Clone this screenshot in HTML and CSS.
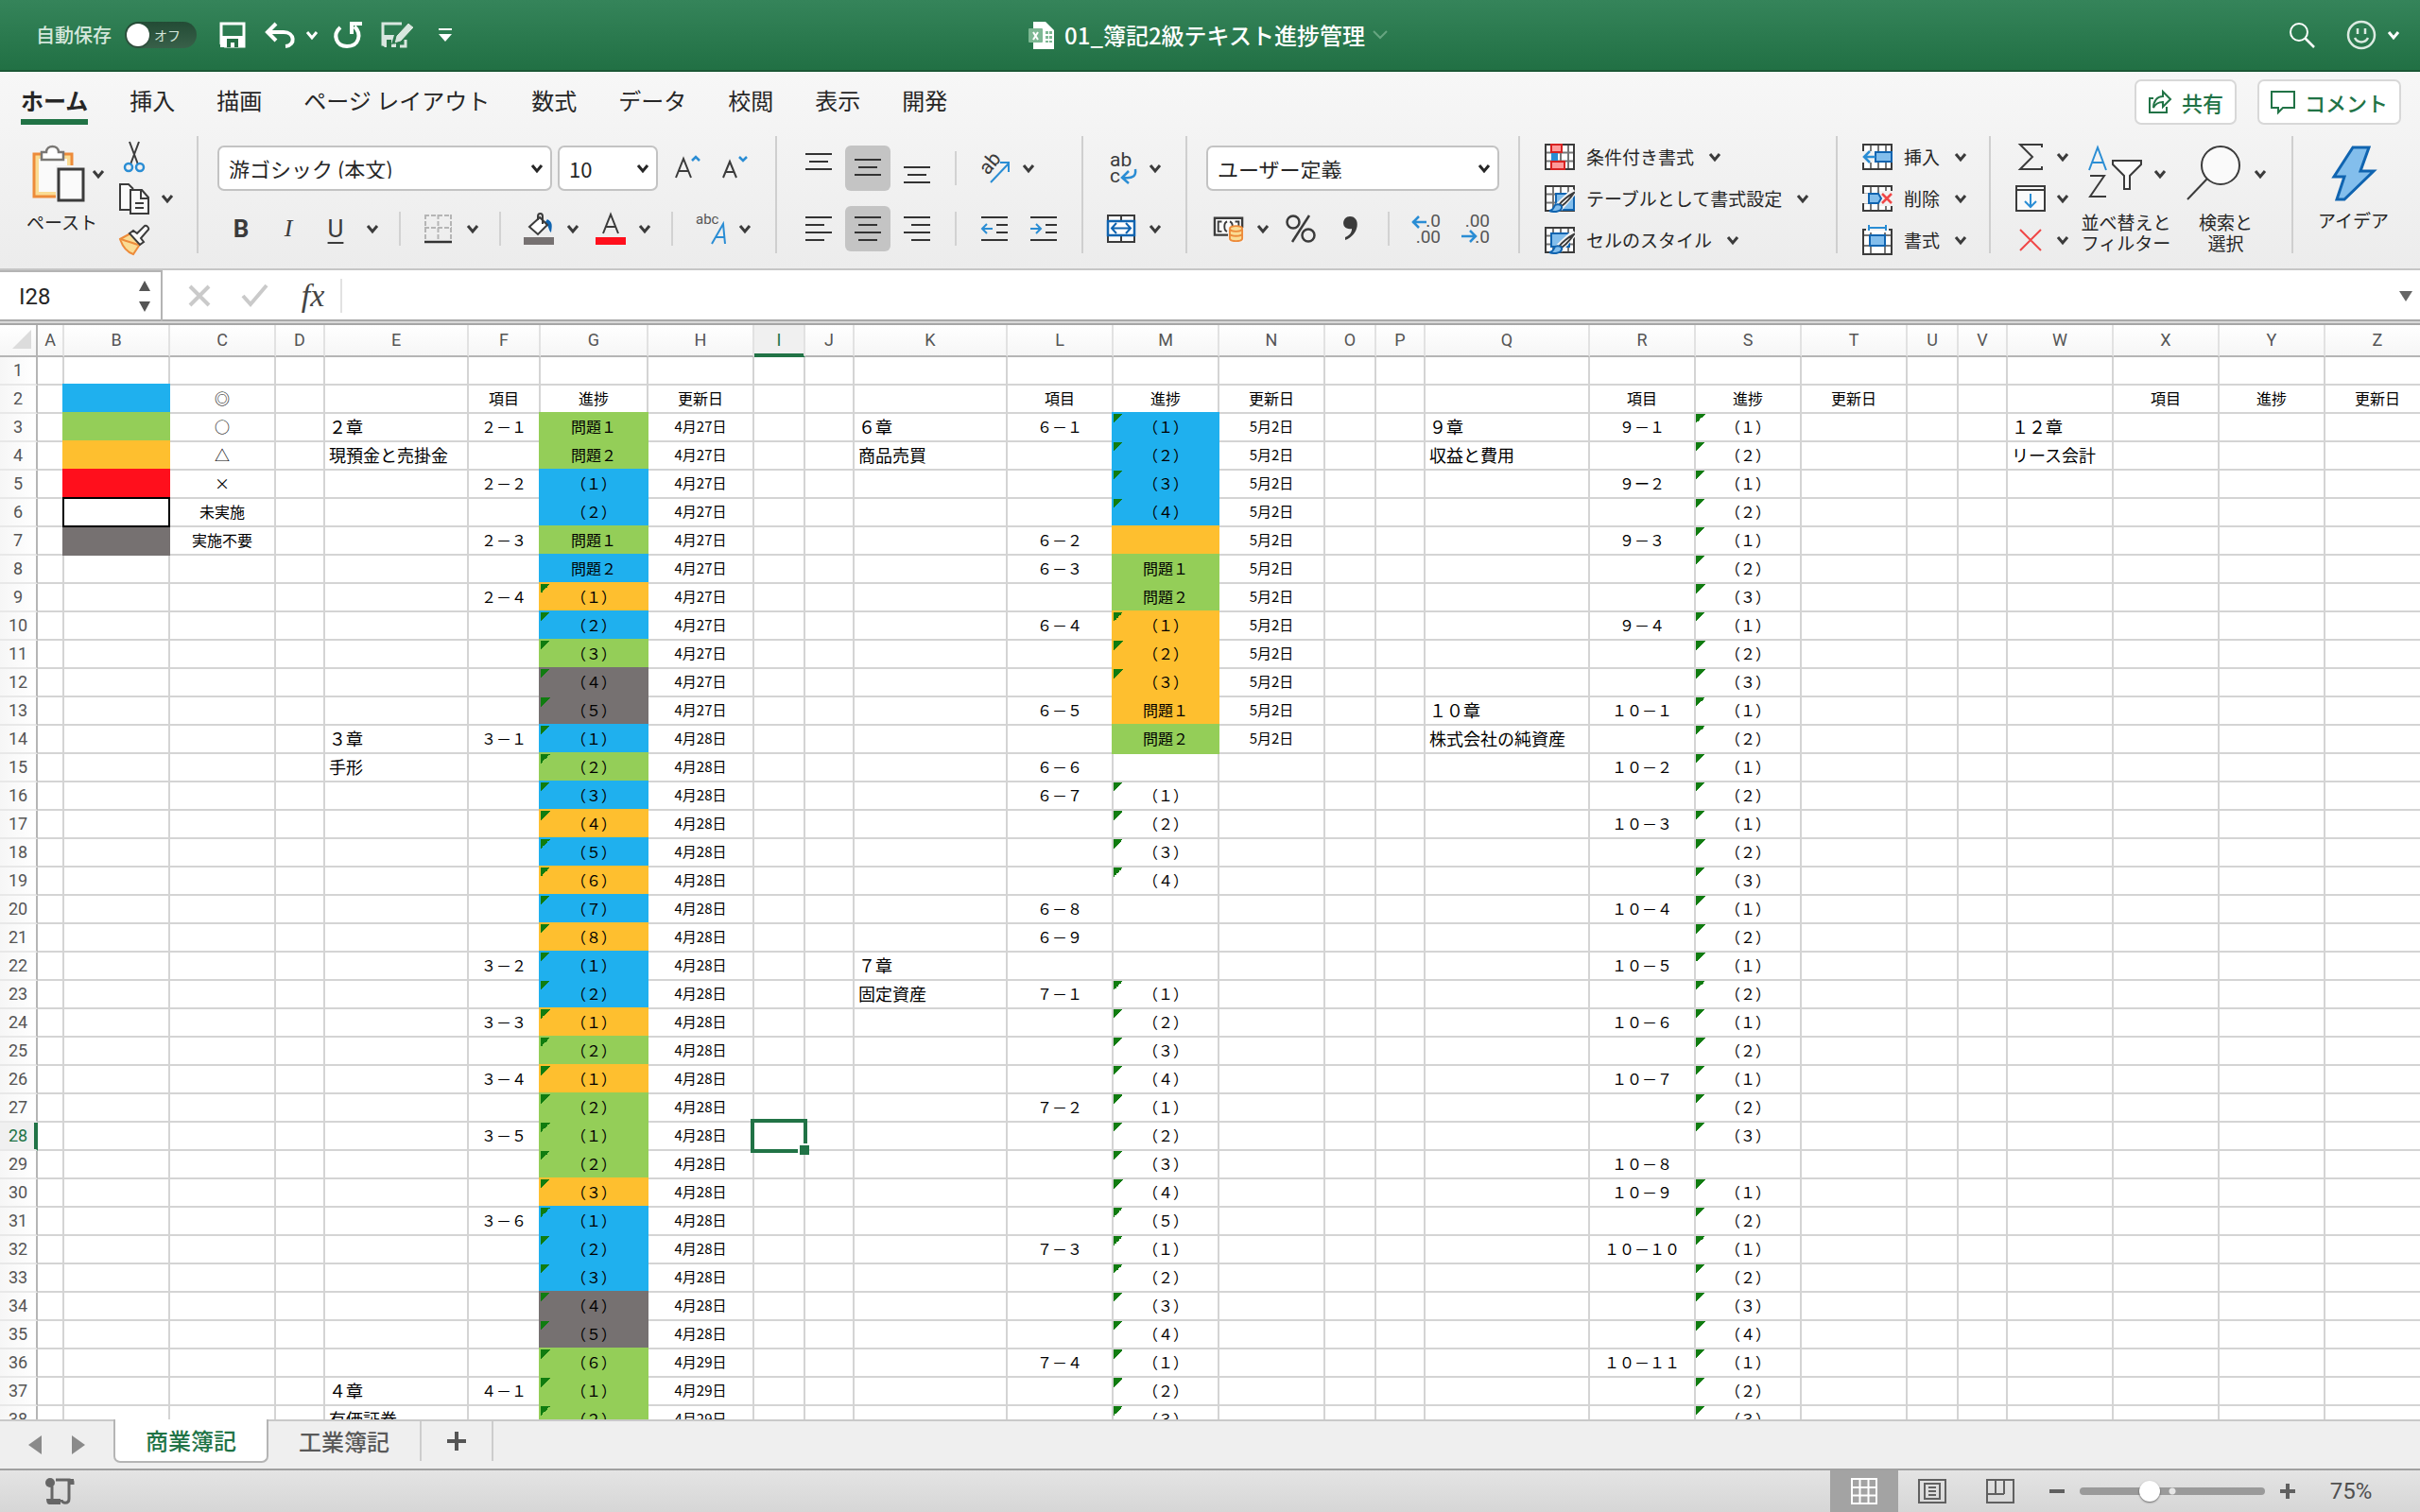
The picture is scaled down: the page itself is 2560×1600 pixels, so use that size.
FILE: index.html
```html
<!DOCTYPE html>
<html lang="ja">
<head>
<meta charset="utf-8">
<title>01_簿記2級テキスト進捗管理</title>
<link rel="stylesheet" href="styles.css">
</head>
<body>
<svg class="sprite" aria-hidden="true">
  <symbol id="chev" viewBox="0 0 24 24"><path d="M7 9l5 6 5-6" fill="none" stroke="currentColor" stroke-width="3"/></symbol>
  <symbol id="grid3" viewBox="0 0 32 28">
    <path d="M1 1h30v26H1z" fill="#fff"/><path d="M1 9.500h30M1 18.500h30M9 1v26M17 1v26M25 1v26" stroke="#777" stroke-width="2"/>
  </symbol>
  <symbol id="brush" viewBox="0 0 32 30">
    <path d="M31 6L15 21l3 3L31 9" fill="#fff" stroke="#f2f2f2" stroke-width="5"/>
    <path d="M31 9C25 12 18 18 16 21l2 2c4-3 9-8 13-14z" fill="#fff" stroke="#3b3b3b" stroke-width="2"/>
    <path d="M5 28c4 0 4-3 6-6 3-2 8 0 7 3-1 4-8 5-13 3z" fill="#83beec" stroke="#1064b0" stroke-width="2"/>
  </symbol>
</svg>

<header class="titlebar">
  <div class="quick">
    <label class="autosave" for="autosave">自動保存</label>
    <span class="toggle"><input type="checkbox" id="autosave"><span class="toggle-text">オフ</span></span>
    <button class="tb save" aria-label="保存"><svg width="28" height="28" viewBox="0 0 28 28"><path d="M2 2h24v24H6l-4-3z" fill="none" stroke="#fff" stroke-width="3"/><path d="M1 15h26v12H1z" fill="#fff"/><path d="M8 18h12v9h-4v-5h-4v5H8z" fill="#256f45"/></svg></button>
    <button class="tb undo" aria-label="元に戻す"><svg width="32" height="28" viewBox="0 0 32 28"><path d="M12 2L3 11l9 9M4 11h16c12 0 13 14 2 15" fill="none" stroke="#fff" stroke-width="4"/></svg></button>
    <button class="tb caret-light" aria-label="元に戻す履歴"><svg width="24" height="24"><use href="#chev"/></svg></button>
    <button class="tb redo" aria-label="繰り返し"><svg width="32" height="30" viewBox="0 0 32 30"><path d="M8 7C-1 15 4 27 15 27c13 0 16-13 8-21" fill="none" stroke="#fff" stroke-width="4"/><path d="M20 14V3h11" fill="none" stroke="#fff" stroke-width="4"/></svg></button>
    <button class="tb edit" aria-label="編集"><svg width="38" height="30" viewBox="0 0 38 30"><g opacity=".82"><path d="M24 3H4v22h3M28 20v7h-6" fill="none" stroke="#fff" stroke-width="3"/><path d="M3 15h13l-3 10 5-1v4H6l-3-3z" fill="#fff"/><path d="M8 20h5v8H8z" fill="#2a7548"/><path d="M16 24l2-8L31 2l6 5-14 15z" fill="#fff" stroke="#2a7548"/></g></svg></button>
    <button class="tb more" aria-label="カスタマイズ"><svg width="16" height="16" viewBox="0 0 16 16"><path d="M1 1h14v2H1zM1 7h14l-7 8z" fill="#fff"/></svg></button>
  </div>
  <h1 class="doc">
    <svg width="28" height="30" viewBox="0 0 28 30"><path d="M5 1h13l9 9v20H5z" fill="#fff"/><path d="M18 11h3v3h-3zM22 11h3v3h-3zM18 16h3v3h-3zM22 16h3v3h-3zM18 21h3v2h-3zM22 21h3v2h-3z" fill="#7db793"/><rect y="8" width="15" height="15" rx="1" fill="#7db793"/><path d="M5 12l5 8M10 12l-5 8" stroke="#fff" stroke-width="2"/></svg>
    <span>01_簿記2級テキスト進捗管理</span>
    <svg class="doc-caret" width="24" height="24" viewBox="0 0 24 24"><path d="M5 8l7 7 7-7" fill="none" stroke="#67a581" stroke-width="2"/></svg>
  </h1>
  <div class="account">
    <button class="tb" aria-label="検索"><svg width="30" height="30" viewBox="0 0 30 30"><circle cx="12" cy="12" r="9" fill="none" stroke="#fff" stroke-width="2"/><path d="M18 18l10 10" stroke="#fff" stroke-width="2.500"/></svg></button>
    <button class="tb smile" aria-label="フィードバック"><svg width="32" height="32" viewBox="0 0 32 32"><g fill="none" stroke="#dcebe2" stroke-width="2.500"><circle cx="16" cy="16" r="14"/><path d="M12 9v6M20 9v6M9 19c3 6 11 6 14 0"/></g></svg></button>
    <button class="tb caret-light" aria-label="アカウント"><svg width="24" height="24"><use href="#chev"/></svg></button>
  </div>
</header>

<section class="ribbon">
  <div class="tabrow">
    <nav class="tabs">
      <a href="#home" class="active">ホーム</a><a href="#insert">挿入</a><a href="#draw">描画</a><a href="#layout">ページ レイアウト</a><a href="#formula">数式</a><a href="#data">データ</a><a href="#review">校閲</a><a href="#view">表示</a><a href="#dev">開発</a>
    </nav>
    <div class="share">
      <button><svg width="26" height="26" viewBox="0 0 26 26"><g fill="none" stroke="#217346" stroke-width="2"><path d="M6 9H2v15h18v-6"/><path d="M16 7V2l8 8-8 8v-5c-5 0-8 2-10 6 0-7 4-12 10-12z"/></g></svg>共有</button>
      <button><svg width="26" height="26" viewBox="0 0 26 26"><path d="M1 2h24v17H13l-5 5v-5H1z" fill="none" stroke="#217346" stroke-width="2"/></svg>コメント</button>
    </div>
  </div>

  <div class="groups">
    <div class="group clipboard">
      <div class="big">
        <div class="split">
          <button aria-label="ペースト"><svg width="56" height="60" viewBox="0 0 56 60"><path d="M2 9h40v45H2z" fill="#fadc94" stroke="#ed8b3a" stroke-width="3"/><path d="M7 14h30v35H7z" fill="#fafafa"/><path d="M10 7h5c0-8 13-8 13 0h5v8H10z" fill="#fff" stroke="#797774" stroke-width="2.500"/><path d="M25 21h31v39H25z" fill="#f2f2f2"/><path d="M28 25h26v33H28z" fill="#fafafa" stroke="#3b3b3b" stroke-width="3"/></svg></button>
          <button class="caret" aria-label="ペーストのオプション"><svg width="24" height="24"><use href="#chev"/></svg></button>
        </div>
        <span class="cap">ペースト</span>
      </div>
      <div class="stack">
        <button aria-label="カット"><svg width="34" height="32" viewBox="0 0 34 32"><path d="M12 0l9 24M22 0l-9 24" stroke="#3b3b3b" stroke-width="2"/><g fill="none" stroke="#2a8dd4" stroke-width="2.500"><circle cx="11" cy="27" r="4"/><circle cx="23" cy="27" r="4"/></g></svg></button>
        <span class="split"><button aria-label="コピー"><svg width="34" height="34" viewBox="0 0 34 34"><path d="M14 29H2V2h9l5 5" fill="#fafafa" stroke="#3b3b3b" stroke-width="2"/><path d="M13 8h12l7 8v17H13z" fill="#fafafa" stroke="#3b3b3b" stroke-width="2"/><path d="M24 8v9h8M18 22h9M18 27h9" fill="none" stroke="#3b3b3b" stroke-width="2"/></svg></button><button class="caret" aria-label="コピーのオプション"><svg width="24" height="24"><use href="#chev"/></svg></button></span>
        <button aria-label="書式のコピー"><svg width="34" height="32" viewBox="0 0 34 32"><path d="M2 15l11-6 11 10-8 12C10 29 5 24 2 15z" fill="#fadc94" stroke="#ed8b3a" stroke-width="2"/><path d="M3 15c8 3 13 4 18 6" stroke="#ed8b3a" stroke-width="2"/><path d="M12 9l4-3 4 3 8-8c2-1 5 2 4 4l-8 9 3 4-4 3z" fill="#fafafa" stroke="#3b3b3b" stroke-width="2"/></svg></button>
      </div>
    </div>

    <div class="group font">
      <div class="line tight">
        <span class="combo wide"><select aria-label="フォント"><option>游ゴシック (本文)</option></select><svg width="24" height="24"><use href="#chev"/></svg></span>
        <span class="combo small"><select aria-label="フォントサイズ"><option>10</option></select><svg width="24" height="24"><use href="#chev"/></svg></span>
        <button class="grow" aria-label="フォントサイズの拡大"><svg width="28" height="28" viewBox="0 0 28 28"><path d="M1 24L9 4l8 20M4 17h10" fill="none" stroke="#3b3b3b" stroke-width="2"/><path d="M18 6l4-4 4 4" fill="none" stroke="#2a8dd4" stroke-width="2.500"/></svg></button>
        <button class="shrink" aria-label="フォントサイズの縮小"><svg width="28" height="28" viewBox="0 0 28 28"><path d="M1 24L8 7l7 17M4 18h8" fill="none" stroke="#3b3b3b" stroke-width="2"/><path d="M18 2l4 4 4-4" fill="none" stroke="#2a8dd4" stroke-width="2.500"/></svg></button>
      </div>
      <div class="line">
        <button class="letter bold">B</button><button class="letter italic">I</button><button class="letter under">U</button><button class="caret" aria-label="下線のオプション"><svg width="24" height="24"><use href="#chev"/></svg></button>
        <i class="vsep"></i>
        <span class="split"><button aria-label="罫線"><svg width="32" height="32" viewBox="0 0 32 32"><path d="M1 2h29M1 15h29M2 1v28M15.500 1v28M29 1v28" stroke="#b5b5b5" stroke-width="2" stroke-dasharray="5 2"/><path d="M1 30h29" stroke="#333" stroke-width="2.500"/></svg></button><button class="caret" aria-label="罫線のオプション"><svg width="24" height="24"><use href="#chev"/></svg></button></span>
        <i class="vsep"></i>
        <span class="split"><button aria-label="塗りつぶしの色"><svg width="32" height="34" viewBox="0 0 32 34"><path d="M25 7c6 3 5 7 4 14-3-2-2-8-7-10z" fill="#1064b0"/><path d="M17 5L6 15l9 8 10-10z" fill="#fff" stroke="#3b3b3b" stroke-width="2"/><path d="M15 8V4c0-4 5-4 5 0v8" fill="none" stroke="#3b3b3b" stroke-width="2"/><path d="M0 26h32v8H0z" fill="#767171"/></svg></button><button class="caret" aria-label="塗りつぶしのオプション"><svg width="24" height="24"><use href="#chev"/></svg></button></span>
        <span class="split next"><button aria-label="フォントの色"><svg width="32" height="34" viewBox="0 0 32 34"><path d="M8 22l8-20 8 20M11 15h10" fill="none" stroke="#3b3b3b" stroke-width="2"/><path d="M0 26h32v8H0z" fill="#ff0f1c"/></svg></button><button class="caret" aria-label="フォントの色のオプション"><svg width="24" height="24"><use href="#chev"/></svg></button></span>
        <i class="vsep"></i>
        <span class="split"><button class="phonetic" aria-label="ふりがな"><svg width="32" height="34" viewBox="0 0 32 34"><text x="0" y="12" font-size="15" fill="#555">abc</text><path d="M17 33L29 12l2 21M21 26h9" fill="none" stroke="#2a8dd4" stroke-width="2"/></svg></button><button class="caret" aria-label="ふりがなのオプション"><svg width="24" height="24"><use href="#chev"/></svg></button></span>
      </div>
    </div>

    <div class="group align">
      <div class="line">
        <span class="trio">
          <button aria-label="上揃え"><svg width="28" height="32" viewBox="0 0 28 32"><path d="M0 1h28M4 9h20M0 17h28" stroke="#333" stroke-width="2"/></svg></button>
          <button class="on" aria-label="上下中央揃え"><svg width="28" height="32" viewBox="0 0 28 32"><path d="M0 7h28M4 15h20M0 23h28" stroke="#333" stroke-width="2"/></svg></button>
          <button aria-label="下揃え"><svg width="28" height="32" viewBox="0 0 28 32"><path d="M0 15h28M4 23h20M0 31h28" stroke="#333" stroke-width="2"/></svg></button>
        </span>
        <i class="vsep"></i>
        <span class="split"><button aria-label="方向"><svg width="32" height="32" viewBox="0 0 32 32"><text font-size="21" fill="#3b3b3b" transform="translate(9 24) rotate(-50)">ab</text><path d="M12 31L31 11M22 10h9v10" fill="none" stroke="#2a8dd4" stroke-width="2"/></svg></button><button class="caret" aria-label="方向のオプション"><svg width="24" height="24"><use href="#chev"/></svg></button></span>
      </div>
      <div class="line">
        <span class="trio">
          <button aria-label="左揃え"><svg width="28" height="28" viewBox="0 0 28 28"><path d="M0 2h28M0 10h20M0 18h28M0 26h20" stroke="#333" stroke-width="2"/></svg></button>
          <button class="on" aria-label="中央揃え"><svg width="28" height="28" viewBox="0 0 28 28"><path d="M0 2h28M4 10h20M0 18h28M4 26h20" stroke="#333" stroke-width="2"/></svg></button>
          <button aria-label="右揃え"><svg width="28" height="28" viewBox="0 0 28 28"><path d="M0 2h28M8 10h20M0 18h28M8 26h20" stroke="#333" stroke-width="2"/></svg></button>
        </span>
        <i class="vsep"></i>
        <span class="pair">
          <button aria-label="インデントを減らす"><svg width="32" height="28" viewBox="0 0 32 28"><path d="M2 2h28M18 10h12M18 18h12M2 26h28" stroke="#333" stroke-width="2"/><path d="M14 14H3M8 9l-5 5 5 5" fill="none" stroke="#2a8dd4" stroke-width="2"/></svg></button>
          <button aria-label="インデントを増やす"><svg width="32" height="28" viewBox="0 0 32 28"><path d="M2 2h28M18 10h12M18 18h12M2 26h28" stroke="#333" stroke-width="2"/><path d="M2 14h11M8 9l5 5-5 5" fill="none" stroke="#2a8dd4" stroke-width="2"/></svg></button>
        </span>
      </div>
    </div>

    <div class="group wrap">
      <div class="line"><span class="split"><button aria-label="折り返して全体を表示"><svg width="32" height="34" viewBox="0 0 32 34"><g font-size="21" fill="#3b3b3b"><text x="4" y="15">ab</text><text x="4" y="32">c</text></g><path d="M31 18c1 7-2 10-12 9M24 20l-7 7 7 6" fill="none" stroke="#2a8dd4" stroke-width="2.500"/></svg></button><button class="caret" aria-label="折り返しのオプション"><svg width="24" height="24"><use href="#chev"/></svg></button></span></div>
      <div class="line"><span class="split"><button aria-label="セルを結合"><svg width="32" height="32" viewBox="0 0 32 32"><path d="M2 2h28v28H2zM16 2v28" fill="#fafafa" stroke="#3b3b3b" stroke-width="2"/><path d="M2 8h28v15H2z" fill="#fff" stroke="#1064b0" stroke-width="2.500"/><path d="M6 15.500h20M11 10l-5 5.500 5 5.500M21 10l5 5.500-5 5.500" fill="none" stroke="#1064b0" stroke-width="2"/></svg></button><button class="caret" aria-label="結合のオプション"><svg width="24" height="24"><use href="#chev"/></svg></button></span></div>
    </div>

    <div class="group number">
      <div class="line"><span class="combo format"><select aria-label="表示形式"><option>ユーザー定義</option></select><svg width="24" height="24"><use href="#chev"/></svg></span></div>
      <div class="line inset">
        <span class="split"><button aria-label="通貨"><svg width="32" height="30" viewBox="0 0 34 30"><path d="M1 3h31v19H1z" fill="#fafafa" stroke="#3b3b3b" stroke-width="2.500"/><path d="M9 7H5v11h4M15 7c-4 1-4 10 0 11M18 7c4 1 4 10 0 11M24 7h4v5" fill="none" stroke="#3b3b3b" stroke-width="2"/><path d="M16 14h18v16H16z" fill="#f2f2f2"/><path d="M18 16v10c0 4 14 4 14 0V16" fill="#fadc94" stroke="#ed8b3a" stroke-width="2"/><ellipse cx="25" cy="15" rx="7" ry="3" fill="#fadc94" stroke="#ed8b3a" stroke-width="2"/><path d="M18 21c1 3 13 3 14 0" fill="none" stroke="#ed8b3a" stroke-width="2"/></svg></button><button class="caret" aria-label="通貨のオプション"><svg width="24" height="24"><use href="#chev"/></svg></button></span>
        <button class="next" aria-label="パーセント"><svg width="32" height="32" viewBox="0 0 32 32"><g fill="none" stroke="#3b3b3b" stroke-width="2.500"><circle cx="8" cy="9" r="6.500"/><circle cx="24" cy="23" r="6.500"/><path d="M25 2L7 30"/></g></svg></button>
        <button class="comma" aria-label="桁区切り"><svg width="32" height="32" viewBox="0 0 32 32"><path d="M16 3c12 0 10 20-5 25v-3c5-2 7-5 7-9-12 2-11-13-2-13z" fill="#3b3b3b"/></svg></button>
        <i class="vsep"></i>
        <span class="pair">
          <button aria-label="小数点以下の桁数を増やす"><svg width="32" height="34" viewBox="0 0 32 34"><g font-size="19" fill="#555" text-anchor="end"><text x="30" y="15">.0</text><text x="30" y="32">.00</text></g><path d="M15 10H0M7 4l-6 6 6 6" fill="none" stroke="#2a8dd4" stroke-width="2.500"/></svg></button>
          <button aria-label="小数点以下の桁数を減らす"><svg width="32" height="34" viewBox="0 0 32 34"><g font-size="19" fill="#555" text-anchor="end"><text x="30" y="15">.00</text><text x="30" y="32">.0</text></g><path d="M0 25h14M9 19l6 6-6 6" fill="none" stroke="#2a8dd4" stroke-width="2.500"/></svg></button>
        </span>
      </div>
    </div>

    <div class="group list styles">
      <button><svg width="32" height="30" viewBox="0 0 32 30"><use href="#grid3" width="32" height="28" y="1"/><path d="M1 2h30v26H1z" fill="none" stroke="#3b3b3b" stroke-width="2"/><path d="M7 11h7v8H7z" fill="#2a8dd4"/><path d="M7 2h11v8H7zM7 20h14v8H7z" fill="#ff9a9a" stroke="#d82222" stroke-width="2"/></svg>条件付き書式<svg class="c" width="24" height="24"><use href="#chev"/></svg></button>
      <button><svg width="32" height="30" viewBox="0 0 32 30"><use href="#grid3" width="32" height="28" y="1"/><path d="M1 2h30v26H1z" fill="none" stroke="#3b3b3b" stroke-width="2"/><path d="M12 10h19v17H12z" fill="#83beec" stroke="#1064b0" stroke-width="2"/><use href="#brush" width="32" height="30"/></svg>テーブルとして書式設定<svg class="c" width="24" height="24"><use href="#chev"/></svg></button>
      <button><svg width="32" height="30" viewBox="0 0 32 30"><use href="#grid3" width="32" height="28" y="1"/><path d="M1 2h30v26H1z" fill="none" stroke="#3b3b3b" stroke-width="2"/><path d="M7 8h19v14H7z" fill="#83beec" stroke="#1064b0" stroke-width="2"/><use href="#brush" width="32" height="30"/></svg>セルのスタイル<svg class="c" width="24" height="24"><use href="#chev"/></svg></button>
    </div>

    <div class="group list cells">
      <button><svg width="32" height="30" viewBox="0 0 32 30"><use href="#grid3" width="32" height="28" y="1"/><path d="M1 10V2h30v26H1v-8" fill="none" stroke="#3b3b3b" stroke-width="2"/><path d="M0 9h14v12H0z" fill="#f2f2f2"/><path d="M14 10h17v10H14z" fill="#83beec" stroke="#1064b0" stroke-width="2"/><path d="M14 15H2M8 9l-6 6 6 6" fill="none" stroke="#2a8dd4" stroke-width="2.500"/></svg>挿入<svg class="c" width="24" height="24"><use href="#chev"/></svg></button>
      <button><svg width="32" height="30" viewBox="0 0 32 30"><use href="#grid3" width="32" height="28" y="1"/><path d="M1 10V2h30v26H1v-8" fill="none" stroke="#3b3b3b" stroke-width="2"/><path d="M0 10h6v10H0zM18 7h14v16H18z" fill="#f2f2f2"/><path d="M7 10h10l3 5-3 5H7z" fill="#83beec" stroke="#1064b0" stroke-width="2"/><path d="M21 10l10 10M31 10L21 20" stroke="#f04747" stroke-width="2.500"/></svg>削除<svg class="c" width="24" height="24"><use href="#chev"/></svg></button>
      <button><svg width="32" height="32" viewBox="0 0 32 32"><path d="M1 5h30v26H1z" fill="#fff"/><path d="M1 11h30M1 22h30M9 8v22M24 8v22" stroke="#777" stroke-width="2"/><path d="M4 5H1v26h30V5h-3" fill="none" stroke="#3b3b3b" stroke-width="2"/><path d="M8 11h16v11H8z" fill="#83beec" stroke="#1064b0" stroke-width="2"/><path d="M5 0h22v6H5z" fill="#f2f2f2"/><path d="M7 0v6M25 0v6M7 3h18" stroke="#2a8dd4" stroke-width="2"/></svg>書式<svg class="c" width="24" height="24"><use href="#chev"/></svg></button>
    </div>

    <div class="group editing">
      <div class="stack">
        <span class="split"><button aria-label="オート SUM"><svg width="32" height="30" viewBox="0 0 32 30"><path d="M28 5V2H5l13 13L5 28h23v-3" fill="none" stroke="#3b3b3b" stroke-width="2"/></svg></button><button class="caret" aria-label="オート SUM のオプション"><svg width="24" height="24"><use href="#chev"/></svg></button></span>
        <span class="split"><button aria-label="フィル"><svg width="32" height="30" viewBox="0 0 32 30"><path d="M1 2h30v26H1zM1 6h30" fill="#fafafa" stroke="#3b3b3b" stroke-width="2"/><path d="M16 10v13M10 18l6 6 6-6" fill="none" stroke="#2a8dd4" stroke-width="2"/></svg></button><button class="caret" aria-label="フィルのオプション"><svg width="24" height="24"><use href="#chev"/></svg></button></span>
        <span class="split"><button aria-label="クリア"><svg width="32" height="30" viewBox="0 0 32 30"><path d="M5 4l22 22M27 4L5 26" stroke="#f04747" stroke-width="2"/></svg></button><button class="caret" aria-label="クリアのオプション"><svg width="24" height="24"><use href="#chev"/></svg></button></span>
      </div>
      <div class="big sort">
        <div class="split"><button aria-label="並べ替えとフィルター"><svg width="58" height="60" viewBox="0 0 58 60"><path d="M1 26l9-24 9 24M4 18h12" fill="none" stroke="#2a8dd4" stroke-width="2"/><path d="M2 32h15L2 54h17" fill="none" stroke="#3b3b3b" stroke-width="2"/><path d="M26 16h30v4L44 32v14h-6V32L26 20z" fill="#fafafa" stroke="#3b3b3b" stroke-width="2"/></svg></button><button class="caret" aria-label="並べ替えのオプション"><svg width="24" height="24"><use href="#chev"/></svg></button></div>
        <span class="cap">並べ替えと<br>フィルター</span>
      </div>
      <div class="big find">
        <div class="split"><button aria-label="検索と選択"><svg width="58" height="60" viewBox="0 0 58 60"><circle cx="36" cy="21" r="20" fill="#fafafa" stroke="#3b3b3b" stroke-width="2"/><path d="M22 35L1 57" stroke="#3b3b3b" stroke-width="2"/></svg></button><button class="caret" aria-label="検索のオプション"><svg width="24" height="24"><use href="#chev"/></svg></button></div>
        <span class="cap">検索と<br>選択</span>
      </div>
    </div>

    <div class="group ideas">
      <button class="idea"><svg width="46" height="60" viewBox="0 0 46 60"><path d="M22 2h17l-9 25h14L13 57H5l8-24H2z" fill="#83beec" stroke="#1064b0" stroke-width="3"/></svg><span class="cap">アイデア</span></button>
    </div>
  </div>
</section>

<section class="formula">
  <div class="namebox"><input type="text" value="I28" aria-label="名前ボックス"><svg width="16" height="34" viewBox="0 0 16 34"><path d="M2 11L8 0l6 11zM2 22h12L8 33z" fill="#555"/></svg></div>
  <button aria-label="キャンセル"><svg width="26" height="26" viewBox="0 0 26 26"><path d="M3 3l20 20M23 3L3 23" stroke="#cacaca" stroke-width="4"/></svg></button>
  <button aria-label="入力"><svg width="30" height="26" viewBox="0 0 30 26"><path d="M2 13l8 9L27 2" fill="none" stroke="#cacaca" stroke-width="4"/></svg></button>
  <button class="fx" aria-label="関数の挿入">fx</button>
  <i class="vsep"></i>
  <input class="entry" type="text" aria-label="数式バー">
  <svg class="expand" width="14" height="12" viewBox="0 0 14 12"><path d="M0 1h14L7 12z" fill="#666"/></svg>
</section>

<main class="sheet"><table id="sheet"></table></main>

<footer>
  <div class="sheetbar">
    <button class="nav" aria-label="前のシート"><svg width="14" height="20" viewBox="0 0 14 20"><path d="M14 0v20L0 10z" fill="#8a8a8a"/></svg></button>
    <button class="nav" aria-label="次のシート"><svg width="14" height="20" viewBox="0 0 14 20"><path d="M0 0v20l14-10z" fill="#8a8a8a"/></svg></button>
    <button class="stab active">商業簿記</button><button class="stab">工業簿記</button>
    <button class="stab add" aria-label="シートの追加"><svg width="20" height="20" viewBox="0 0 20 20"><path d="M0 10h20M10 0v20" stroke="#555" stroke-width="4"/></svg></button>
  </div>
  <div class="status">
    <button class="macro" aria-label="マクロの記録"><svg width="32" height="30" viewBox="0 0 32 30"><circle cx="6" cy="6" r="5" fill="#666"/><path d="M8 10v14M12 3h14v20c0 6-8 5-8 1M30 8V5c0-2-4-2-4 0" fill="none" stroke="#666" stroke-width="3"/><path d="M2 23h15v6H5c-2 0-3-3-3-6z" fill="#666"/><path d="M24 2h7v6h-5z" fill="#666"/></svg></button>
    <div class="views">
      <button class="on" aria-label="標準"><svg width="28" height="28" viewBox="0 0 28 28"><path d="M1 1h26v26H1zM1 10h26M1 18.500h26M9.500 1v26M18.500 1v26" fill="none" stroke="#fff" stroke-width="2"/></svg></button>
      <button aria-label="ページ レイアウト"><svg width="30" height="28" viewBox="0 0 30 28"><path d="M1 2h28v24H1zM7 6h16v16H7zM11 10h8M11 14h8M11 18h8" fill="none" stroke="#606060" stroke-width="2"/></svg></button>
      <button aria-label="改ページ プレビュー"><svg width="30" height="28" viewBox="0 0 30 28"><path d="M1 2h28v24H1zM10 2v15M19 2v15M1 17h18" fill="none" stroke="#606060" stroke-width="2"/></svg></button>
    </div>
    <button class="step" aria-label="縮小"><svg width="20" height="20" viewBox="0 0 20 20"><path d="M2 10h16" stroke="#606060" stroke-width="4"/></svg></button>
    <input type="range" class="zoom" min="0" max="100" value="36" aria-label="ズーム">
    <button class="step" aria-label="拡大"><svg width="20" height="20" viewBox="0 0 20 20"><path d="M2 10h16M10 2v16" stroke="#606060" stroke-width="4"/></svg></button>
    <button class="pct">75%</button>
  </div>
</footer>
<script src="sheet.js"></script>
</body>
</html>
```
FILE: styles.css
```css
*{box-sizing:border-box}
body{margin:0;height:100vh;display:flex;flex-direction:column;overflow:hidden;background:#fff;color:#262626;font-family:"Noto Sans CJK JP",sans-serif;font-size:19px;line-height:22px}
button,input,select{font:inherit;color:inherit;margin:0;padding:0;border:0;background:none}
button{display:inline-flex;align-items:center;justify-content:center;flex:none}
svg{display:block;flex:none;overflow:visible}
svg text{font-family:Roboto,sans-serif}
.sprite{width:0;height:0;position:absolute}

/* title bar */
.titlebar{display:grid;grid-template-columns:1fr auto 1fr;align-items:center;flex:none;height:76px;background:linear-gradient(#35845a,#217044);border-bottom:2px solid #1b5735;color:#fff}
.quick{display:flex;align-items:center;padding-left:38px}
.autosave{font-size:20px;font-weight:500;color:#d5e7dc}
.toggle{display:grid;align-items:center;width:76px;height:28px;margin:0 24px 0 14px}
.toggle>*{grid-area:1/1}
.toggle input{appearance:none;width:76px;height:28px;border-radius:14px;background:linear-gradient(#234b35,#386049);display:flex;align-items:center}
.toggle input::before{content:"";width:24px;height:24px;margin-left:2px;border-radius:50%;background:#fff;box-shadow:0 1px 2px #0006}
.toggle-text{font-size:14px;padding-left:31px;color:#d5e7dc}
.undo{margin-left:20px}
.caret-light{margin-left:6px;color:#fff}
.redo{margin-left:10px}
.edit{margin-left:17px}
.more{margin-left:24px}
.doc{display:flex;align-items:center;gap:10px;margin:0;font-size:24px;font-weight:500}
.doc-caret{margin-left:-6px}
.account{display:flex;align-items:center;justify-content:flex-end;padding-right:16px}
.smile{margin-left:32px}

/* ribbon */
.ribbon{flex:none;height:210px;background:linear-gradient(#f7f7f7,#ececec);border-bottom:2px solid #c6c6c6}
.tabrow{display:flex;justify-content:space-between;height:68px;padding:8px 20px 0 22px}
.tabs{display:flex;gap:44px;font-size:24px;line-height:44px}
.tabs a{color:inherit;text-decoration:none;height:48px}
.tabs .active{font-weight:700;background:linear-gradient(#217346,#217346) 0 42px/72px 6px no-repeat}
.share{display:flex;gap:22px}
.share button{height:48px;padding:0 12px;gap:10px;font-size:22px;line-height:44px;font-weight:500;color:#217346;background:#fff;border:2px solid #d8d8d8;border-radius:7px}
.groups{display:grid;grid-template-columns:210px 612px 324px 110px 352px 336px 162px 320px 1fr}
.group{height:132px;background:linear-gradient(#cfcfcf,#cfcfcf) 100% 0/2px 124px no-repeat}
.ideas{background:none}
.font,.align,.wrap,.number{padding:10px 0 0 20px;display:flex;flex-direction:column;gap:16px}
.wrap{padding-left:24px}
.line{display:flex;align-items:center;height:48px}
.line.tight{gap:6px}
.inset{padding-left:8px}
.split{display:flex;align-items:center;gap:8px}
.caret,.c{color:#3b3b3b}
.next{margin-left:12px}
.vsep{width:2px;height:36px;margin:0 24px 0 16px;background:#d2d2d2;flex:none}
.combo{display:grid;align-items:center}
.combo>*{grid-area:1/1}
.combo svg{justify-self:end;margin-right:4px;pointer-events:none}
.combo select{appearance:none;width:100%;height:48px;padding:0 10px;font-size:22px;background:#fff;border:2px solid #c3c3c3;border-radius:7px}
.combo.wide{width:354px}
.combo.small{width:106px}
.combo.format{width:310px}
.grow{margin-left:12px}
.shrink{margin-left:16px}
.letter{width:50px;font:26px Roboto,sans-serif;color:#3b3b3b}
.letter.bold{font-weight:700}
.letter.italic{font-family:"Liberation Serif",serif;font-style:italic}
.letter.under{text-decoration:underline;text-underline-offset:5px;margin-right:2px}
.trio{display:flex;gap:4px}
.trio button{width:48px;height:48px;border-radius:6px}
.trio .on{background:#c4c4c4}
.pair{display:flex;gap:20px}
.comma{margin:0 8px 0 20px}
.list{display:flex;flex-direction:column;align-items:flex-start;padding-left:26px}
.list button{height:44px}
.list button>svg:first-child{margin-right:12px}
.list .c{margin-left:10px}
.clipboard{display:flex;padding-left:28px}
.big{display:flex;flex-direction:column;align-items:center;padding-top:10px}
.big .split{margin-bottom:10px}
.cap{text-align:center}
.clipboard .big{align-items:flex-start}
.clipboard .big .split{padding-left:6px;gap:2px}
.clipboard .stack{margin-left:9px}
.clipboard .stack .split{gap:6px}
.stack{display:flex;flex-direction:column}
.stack>*{height:44px;align-self:flex-start}
.editing{display:flex;padding-left:26px}
.editing .stack .split{gap:6px}
.sort{margin-left:7px}
.sort .split{padding-left:8px;gap:6px}
.find{margin-left:2px;width:120px;align-items:flex-start}
.find .split{padding-left:14px;gap:8px}
.find .cap{padding-left:27px}
.ideas{display:flex;padding:10px 0 0 26px;align-items:flex-start}
.idea{flex-direction:column;gap:8px}

/* formula bar */
.formula{flex:none;display:flex;align-items:center;height:58px;border-bottom:4px solid #d9d9d9;box-shadow:inset 0 -2px #aaa}
.namebox{display:flex;align-items:center;width:172px;height:100%;padding:0 9px 0 20px;border:solid #b4b4b4;border-width:2px 2px 0 0;margin-right:26px}
.namebox input{flex:1;min-width:0;height:34px;font:24px Roboto,sans-serif}
.formula button{margin:0 31px 0 0}
.formula button.fx{font:italic 34px/34px "Liberation Serif",serif;color:#444;margin:0 14px 0 0;width:30px}
.formula .vsep{margin:0 8px 0 0;background:#e2e2e2}
.entry{flex:1}
.expand{margin-right:8px}

/* cells */
.sheet{flex:1;min-height:0;overflow:hidden;border-top:2px solid #a6a6a6;margin-top:-2px;background:#fff}
table{table-layout:fixed;border-collapse:separate;border-spacing:0;width:2572px}
th{font:18px Roboto,sans-serif;color:#555;padding:0 0 2px;text-align:center}
thead th{height:34px;border-right:2px solid #e2e2e2;border-bottom:2px solid #b5b5b5;background:linear-gradient(#fff,#f6f6f6)}
thead th:first-child,tbody th{border-right:2px solid #b5b5b5}
tbody th{border-bottom:2px solid #e8e8e8;background:linear-gradient(90deg,#f6f6f6,#fff)}
thead .cur{color:#217346;background:#f0f0f0;border-bottom-color:#217346;box-shadow:inset 0 -2px #217346}
tbody .cur{color:#217346;background:#f0f0f0;border-right-color:#217346;box-shadow:inset -2px 0 #217346}
.corner svg{margin-left:auto;margin-right:5px}
td{height:30px;padding:0 0 2px;border:solid #d4d4d4;border-width:0 2px 2px 0;font-size:16px;line-height:24px;text-align:center;white-space:nowrap;color:#000}
td.name{font-size:18px;text-align:left;padding-left:4px}
td.date{font-size:15px}
td.err{background-image:linear-gradient(135deg,#107c10 50%,transparent 50%);background-size:10px 10px;background-repeat:no-repeat}
.blue,.green,.amber,.red,.gray{background-color:var(--c);border-color:var(--c);box-shadow:-2px -2px var(--c),0 -2px var(--c),-2px 0 var(--c)}
.blue{--c:#1fb0ee}
.green{--c:#94ce58}
.amber{--c:#febf2f}
.red{--c:#ff0f1c}
.gray{--c:#767171}
.boxed{border-color:#000;box-shadow:-2px -2px #000,0 -2px #000,-2px 0 #000;background:#fff}
.boxed-below{box-shadow:-2px 0 var(--c)}
.selected{position:relative}
.selected::before{content:"";position:absolute;inset:-4px;border:4px solid #217346}
.selected::after{content:"";position:absolute;right:-6px;bottom:-6px;width:10px;height:10px;background:#217346;box-shadow:-2px -2px #fff}

/* sheet tabs and status bar */
footer{flex:none}
.sheetbar{display:flex;height:54px;background:#efefef;border-top:2px solid #c9c9c9;border-bottom:2px solid #a0a0a0}
.nav{width:14px;margin-left:30px;height:50px}
.nav+.nav{margin-left:32px;margin-right:30px}
.stab{height:42px;padding:0 32px;font-size:24px;font-weight:500;color:#595959;border-right:2px solid #cdcdcd}
.stab.active{height:46px;margin-top:-2px;background:#fff;color:#217346;border:solid #b5b5b5;border-width:0 2px 2px;border-radius:0 0 7px 7px}
.stab.add{padding:0 27px}
.status{display:flex;align-items:center;height:44px;padding:0 48px 0 47px;background:linear-gradient(#e4e4e4,#d6d6d6)}
.views{display:flex;margin:0 14px 0 auto}
.views button{width:72px;height:44px}
.views .on{background:#a3a3a3}
.zoom{appearance:none;width:196px;height:22px;margin:0 14px}
.zoom::-webkit-slider-runnable-track{height:8px;border-radius:4px;background:radial-gradient(circle at 50% 50%,#e6e6e6 3px,transparent 4px),#9a9a9a}
.zoom::-webkit-slider-thumb{appearance:none;width:22px;height:22px;margin-top:-7px;border-radius:50%;background:#fff;box-shadow:0 1px 2px #0008}
.pct{width:50px;margin-left:32px;font:24px Roboto,sans-serif;color:#505050}
```
FILE: sheet.js
```js
const widths = [28,112,112,52,152,76,114,112,54,52,162,112,112,112,54,52,174,112,112,112,54,52,112,112,112,112];
const ROWS = 38;
const cells = {};
const put = (ref, text, cls = '') => { cells[ref] = [text, cls]; };
const wide = s => s.replace(/[0-9()\-]/g, c => String.fromCharCode(c.charCodeAt(0) + 0xFEE0));

// Legend
[['blue','◎'],['green','○'],['amber','△'],['red','×'],['boxed','未実施'],['gray boxed-below','実施不要']]
  .forEach(([c, t], i) => { put('B' + (i + 2), '', c); put('C' + (i + 2), t); });

for (const [a, b, c] of ['FGH','LMN','RST','XYZ']) {
  put(a + 2, '項目'); put(b + 2, '進捗'); put(c + 2, '更新日');
}

// Chapter titles: column, row, number, name
[['E',3,'2','現預金と売掛金'],['E',14,'3','手形'],['E',37,'4','有価証券'],['K',3,'6','商品売買'],['K',22,'7','固定資産'],
 ['Q',3,'9','収益と費用'],['Q',13,'10','株式会社の純資産'],['W',3,'12','リース会計']]
  .forEach(([c, r, n, t]) => { put(c + r, wide(n) + '章', 'name'); put(c + (r + 1), t, 'name'); });

// Section numbers keyed by row
const sections = {
  F: {3:'2-1',5:'2-2',7:'2-3',9:'2-4',14:'3-1',22:'3-2',24:'3-3',26:'3-4',28:'3-5',31:'3-6',37:'4-1'},
  L: {3:'6-1',7:'6-2',8:'6-3',10:'6-4',13:'6-5',15:'6-6',16:'6-7',20:'6-8',21:'6-9',23:'7-1',27:'7-2',32:'7-3',36:'7-4'},
  R: {3:'9-1',5:'9ー2',7:'9-3',10:'9-4',13:'10-1',15:'10-2',17:'10-3',20:'10-4',22:'10-5',24:'10-6',26:'10-7',29:'10-8',30:'10-9',32:'10-10',36:'10-11'}
};
for (const col in sections) for (const r in sections[col]) put(col + r, wide(sections[col][r]));

// Progress from row 3: q = 問題, digit = (n), "." = empty; fills are b, g, a, x
const progress = {
  G: ['q1 q2 1 2 q1 q2 1 2 3 4 5 1 2 3 4 5 6 7 8 1 2 1 2 1 2 1 2 3 1 2 3 4 5 6 1 2', 'ggbbgbabgxxbgbabababbagagggabbbxxggg'],
  M: ['1 2 3 4 . q1 q2 1 2 3 q1 q2 . 1 2 3 4 . . . 1 2 3 4 1 2 3 4 5 1 2 3 4 1 2 3', 'bbbbaggaaaag'],
  S: ['1 2 1 2 1 2 3 1 2 3 1 2 1 2 1 2 3 1 2 1 2 1 2 1 2 3 . 1 2 1 2 3 4 1 2 3', '']
};
const colours = {b:'blue', g:'green', a:'amber', x:'gray'};
for (const col in progress) {
  progress[col][0].split(' ').forEach((t, i) => {
    const r = i + 3, fill = colours[progress[col][1][i]] || '';
    if (t === '.') { put(col + r, '', fill); return; }
    if (t[0] === 'q') { put(col + r, '問題' + wide(t[1]), fill); return; }
    const flagged = !(col === 'G' && r < 9);
    put(col + r, wide('(' + t + ')'), fill + (flagged ? ' err' : ''));
  });
}

for (let r = 3; r <= ROWS; r++) put('H' + r, r < 14 ? '4月27日' : r < 36 ? '4月28日' : '4月29日', 'date');
for (let r = 3; r <= 14; r++) put('N' + r, '5月2日', 'date');
put('I28', '', 'selected');

const letters = widths.map((_, i) => String.fromCharCode(65 + i));
let html = '<colgroup><col style="width:40px">' + widths.map(w => `<col style="width:${w}px">`).join('') + '</colgroup>';
html += '<thead><tr><th class="corner"><svg width="20" height="20" viewBox="0 0 20 20"><path d="M20 0v20H0z" fill="#dcdcdc"/></svg></th>' +
  letters.map(l => `<th scope="col" class="${l === 'I' ? 'cur' : ''}">${l}</th>`).join('') + '</tr></thead><tbody>';
for (let r = 1; r <= ROWS; r++) {
  html += `<tr><th scope="row" class="${r === 28 ? 'cur' : ''}">${r}</th>` +
    letters.map(l => { const [t, c] = cells[l + r] || ['', '']; return `<td class="${c}">${t}</td>`; }).join('') + '</tr>';
}
document.getElementById('sheet').innerHTML = html + '</tbody>';
```
